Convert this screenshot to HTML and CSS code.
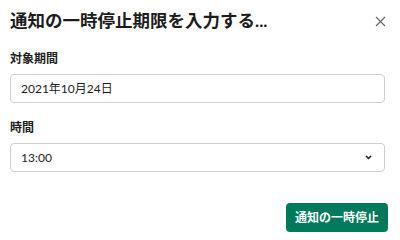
FILE: index.html
```html
<!DOCTYPE html>
<html lang="ja">
<head>
<meta charset="utf-8">
<link rel="stylesheet" href="styles.css">
</head>
<body>
<div class="dialog">
  <div class="header">
    <h1 class="title">通知の一時停止期限を入力する...</h1>
    <span class="close" aria-label="閉じる">
      <svg width="11" height="11" viewBox="0 0 11 11"><path d="M1 1 L10 10 M10 1 L1 10" stroke="#6b6b6b" stroke-width="1.2" fill="none"/></svg>
    </span>
  </div>
  <div class="field">
    <div class="label">対象期間</div>
    <div class="input">2021年10月24日</div>
  </div>
  <div class="field">
    <div class="label">時間</div>
    <div class="input select">
      <span>13:00</span>
      <svg class="chev" width="7" height="5" viewBox="0 0 7 5"><path d="M1 1 L3.5 3.5 L6 1" stroke="#1d1c1d" stroke-width="1.5" fill="none"/></svg>
    </div>
  </div>
  <div class="footer">
    <button class="btn">通知の一時停止</button>
  </div>
</div>
</body>
</html>
```
FILE: styles.css
```css
html, body {
  margin: 0;
  padding: 0;
  background: #fff;
}
body {
  font-family: Lato, "Noto Sans CJK JP", sans-serif;
  color: #1d1c1d;
  width: 400px;
  height: 240px;
  overflow: hidden;
}
.dialog {
  padding: 9px 15px 0 10px;
  display: flex;
  flex-direction: column;
}
.header {
  display: flex;
  align-items: center;
  justify-content: space-between;
  height: 24px;
}
.title {
  margin: 0;
  font-size: 17.5px;
  font-weight: 700;
  line-height: 24px;
  color: #1d1c1d;
}
.close {
  display: flex;
  width: 11px;
  height: 11px;
  margin-right: -1px;
}
.field {
  display: flex;
  flex-direction: column;
}
.header + .field { margin-top: 18px; }
.field + .field { margin-top: 17px; }
.label {
  font-size: 12px;
  font-weight: 700;
  line-height: 16px;
  margin-bottom: 7px;
}
.input {
  box-sizing: border-box;
  height: 29px;
  border: 1px solid #cfcfcf;
  border-radius: 4px;
  padding: 0 10px;
  font-size: 12px;
  line-height: 27px;
  display: flex;
  align-items: center;
}
.select {
  justify-content: space-between;
  padding-right: 12px;
}
.chev { display: block; }
.footer {
  display: flex;
  justify-content: flex-end;
  margin-top: 31px;
  margin-right: -3px;
}
.btn {
  font-family: Lato, "Noto Sans CJK JP", sans-serif;
  background: #007a5a;
  color: #fff;
  border: none;
  border-radius: 4px;
  height: 29px;
  padding: 0 9px;
  font-size: 12px;
  font-weight: 700;
  line-height: 29px;
}
```
